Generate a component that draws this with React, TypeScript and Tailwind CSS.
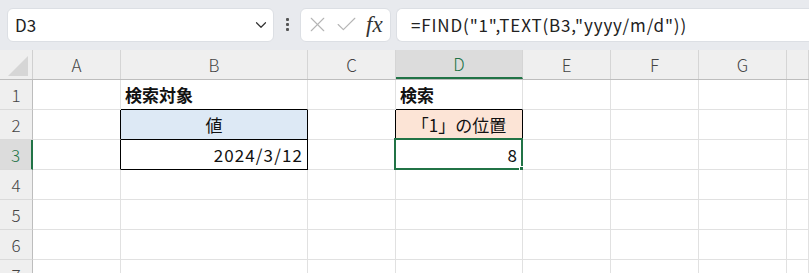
import { ChevronDown, X, Check } from 'lucide-react';

const cols = ['A', 'B', 'C', 'D', 'E', 'F', 'G', 'H'];
const widths = ['w-[88px]', 'w-[187px]', 'w-[88px]', 'w-[127px]', 'w-[88px]', 'w-[88px]', 'w-[88px]', 'flex-1'];

type CellData = {
  text?: string;
  align?: 'left' | 'center' | 'right';
  bold?: boolean;
  num?: boolean;
  bg?: string;
  r?: boolean;
  b?: boolean;
  selected?: boolean;
};

// row -> col index -> cell
const data: Record<number, Record<number, CellData>> = {
  1: { 1: { text: '検索対象', bold: true, b: true }, 3: { text: '検索', bold: true, b: true } },
  2: {
    0: { r: true },
    1: { text: '値', align: 'center', bg: 'bg-[#dde9f5]', r: true, b: true },
    2: { r: true },
    3: { text: '「1」の位置', align: 'center', bg: 'bg-[#fce4d6]', r: true, b: true },
  },
  3: {
    0: { r: true },
    1: { text: '2024/3/12', align: 'right', num: true, r: true, b: true },
    3: { text: '8', align: 'right', num: true, selected: true },
  },
};

function Cell({ w, cell }: { w: string; cell?: CellData }) {
  const c = cell || {};
  const align = c.align === 'center' ? 'justify-center' : c.align === 'right' ? 'justify-end' : 'justify-start';
  return (
    <div
      className={`relative h-full ${w} shrink-0 flex items-center px-[4px] border-r border-b ${
        c.r ? 'border-r-black' : 'border-r-[#e1e1e1]'
      } ${c.b ? 'border-b-black' : 'border-b-[#e1e1e1]'} ${c.bg || 'bg-white'} ${align}`}
    >
      {c.text && (
        <span
          className={`text-[17px] text-[#111] leading-none ${c.bold ? 'font-bold' : ''} ${
            c.num ? 'tracking-[1.1px]' : ''
          }`}
        >
          {c.text}
        </span>
      )}
      {c.selected && (
        <>
          <div className="absolute left-[-2px] top-[-2px] right-[-1px] bottom-[-1px] border-2 border-[#217346]" />
          <div className="absolute right-[-4px] bottom-[-4px] w-[7px] h-[7px] bg-[#217346] border border-white" />
        </>
      )}
    </div>
  );
}

export default function App() {
  return (
    <div
      className="w-[809px] h-[273px] overflow-hidden bg-white"
      style={{ fontFamily: '"Noto Sans CJK JP", "Noto Sans", sans-serif' }}
    >
      {/* Formula bar */}
      <div className="h-[50px] bg-[#e8eaee] flex items-center pl-[7px] pb-[1px]">
        <div className="w-[267px] h-[34px] bg-white rounded-[6px] border border-[#dcdfe4] flex items-center justify-between pl-[7px] pr-[3px]">
          <span className="text-[17px] text-[#222]">D3</span>
          <ChevronDown size={18} strokeWidth={1.6} className="text-[#333]" />
        </div>
        <div className="ml-[6px] w-[14px] flex flex-col items-center gap-[2px]">
          <span className="w-[3px] h-[3px] bg-[#555] rounded-[1px]" />
          <span className="w-[3px] h-[3px] bg-[#555] rounded-[1px]" />
          <span className="w-[3px] h-[3px] bg-[#555] rounded-[1px]" />
        </div>
        <div className="ml-[6px] w-[91px] h-[34px] bg-white rounded-[6px] border border-[#dcdfe4] flex items-center pl-[4px] gap-[4px]">
          <X size={25} strokeWidth={1.1} className="text-[#b5b5b5]" />
          <Check size={25} strokeWidth={1.1} className="text-[#b5b5b5]" />
          <span
            className="text-[23px] italic text-[#333] ml-[3px] leading-none"
            style={{ fontFamily: '"Liberation Serif", serif' }}
          >
            fx
          </span>
        </div>
        <div className="ml-[5px] flex-1 h-[34px] bg-white rounded-l-[6px] border border-r-0 border-[#dcdfe4] flex items-center pl-[14px]">
          <span className="text-[17px] text-[#222] tracking-[0.85px]">=FIND("1",TEXT(B3,"yyyy/m/d"))</span>
        </div>
      </div>

      {/* Column headers */}
      <div className="h-[30px] flex bg-[#efefef] border-b border-[#bdbdbd]">
        <div className="w-[33px] shrink-0 h-full border-r border-[#d0d0d0] flex items-end justify-end pr-[4px] pb-[3px]">
          <div className="w-0 h-0 border-l-[20px] border-l-transparent border-b-[20px] border-b-[#d6d6d6]" />
        </div>
        {cols.map((c, i) => (
          <div
            key={c}
            className={`h-full ${widths[i]} shrink-0 flex items-center justify-center border-r border-[#d5d5d5] text-[17px] font-light ${
              c === 'D' ? 'bg-[#dcdcdc] text-[#217346] border-b-2 border-b-[#217346]' : 'text-[#444]'
            }`}
          >
            {c !== 'H' && c}
          </div>
        ))}
      </div>

      {/* Rows */}
      {[1, 2, 3, 4, 5, 6, 7].map((r) => (
        <div key={r} className="h-[30px] flex">
          <div
            className={`w-[33px] shrink-0 h-full flex items-center justify-center border-b border-b-[#dadada] text-[17px] font-light ${
              r === 3
                ? 'bg-[#dcdcdc] text-[#217346] border-r-2 border-r-[#217346]'
                : 'bg-[#efefef] text-[#444] border-r border-r-[#bdbdbd]'
            }`}
          >
            {r}
          </div>
          {cols.map((c, i) => (
            <Cell key={c} w={widths[i]} cell={data[r]?.[i]} />
          ))}
        </div>
      ))}
    </div>
  );
}
